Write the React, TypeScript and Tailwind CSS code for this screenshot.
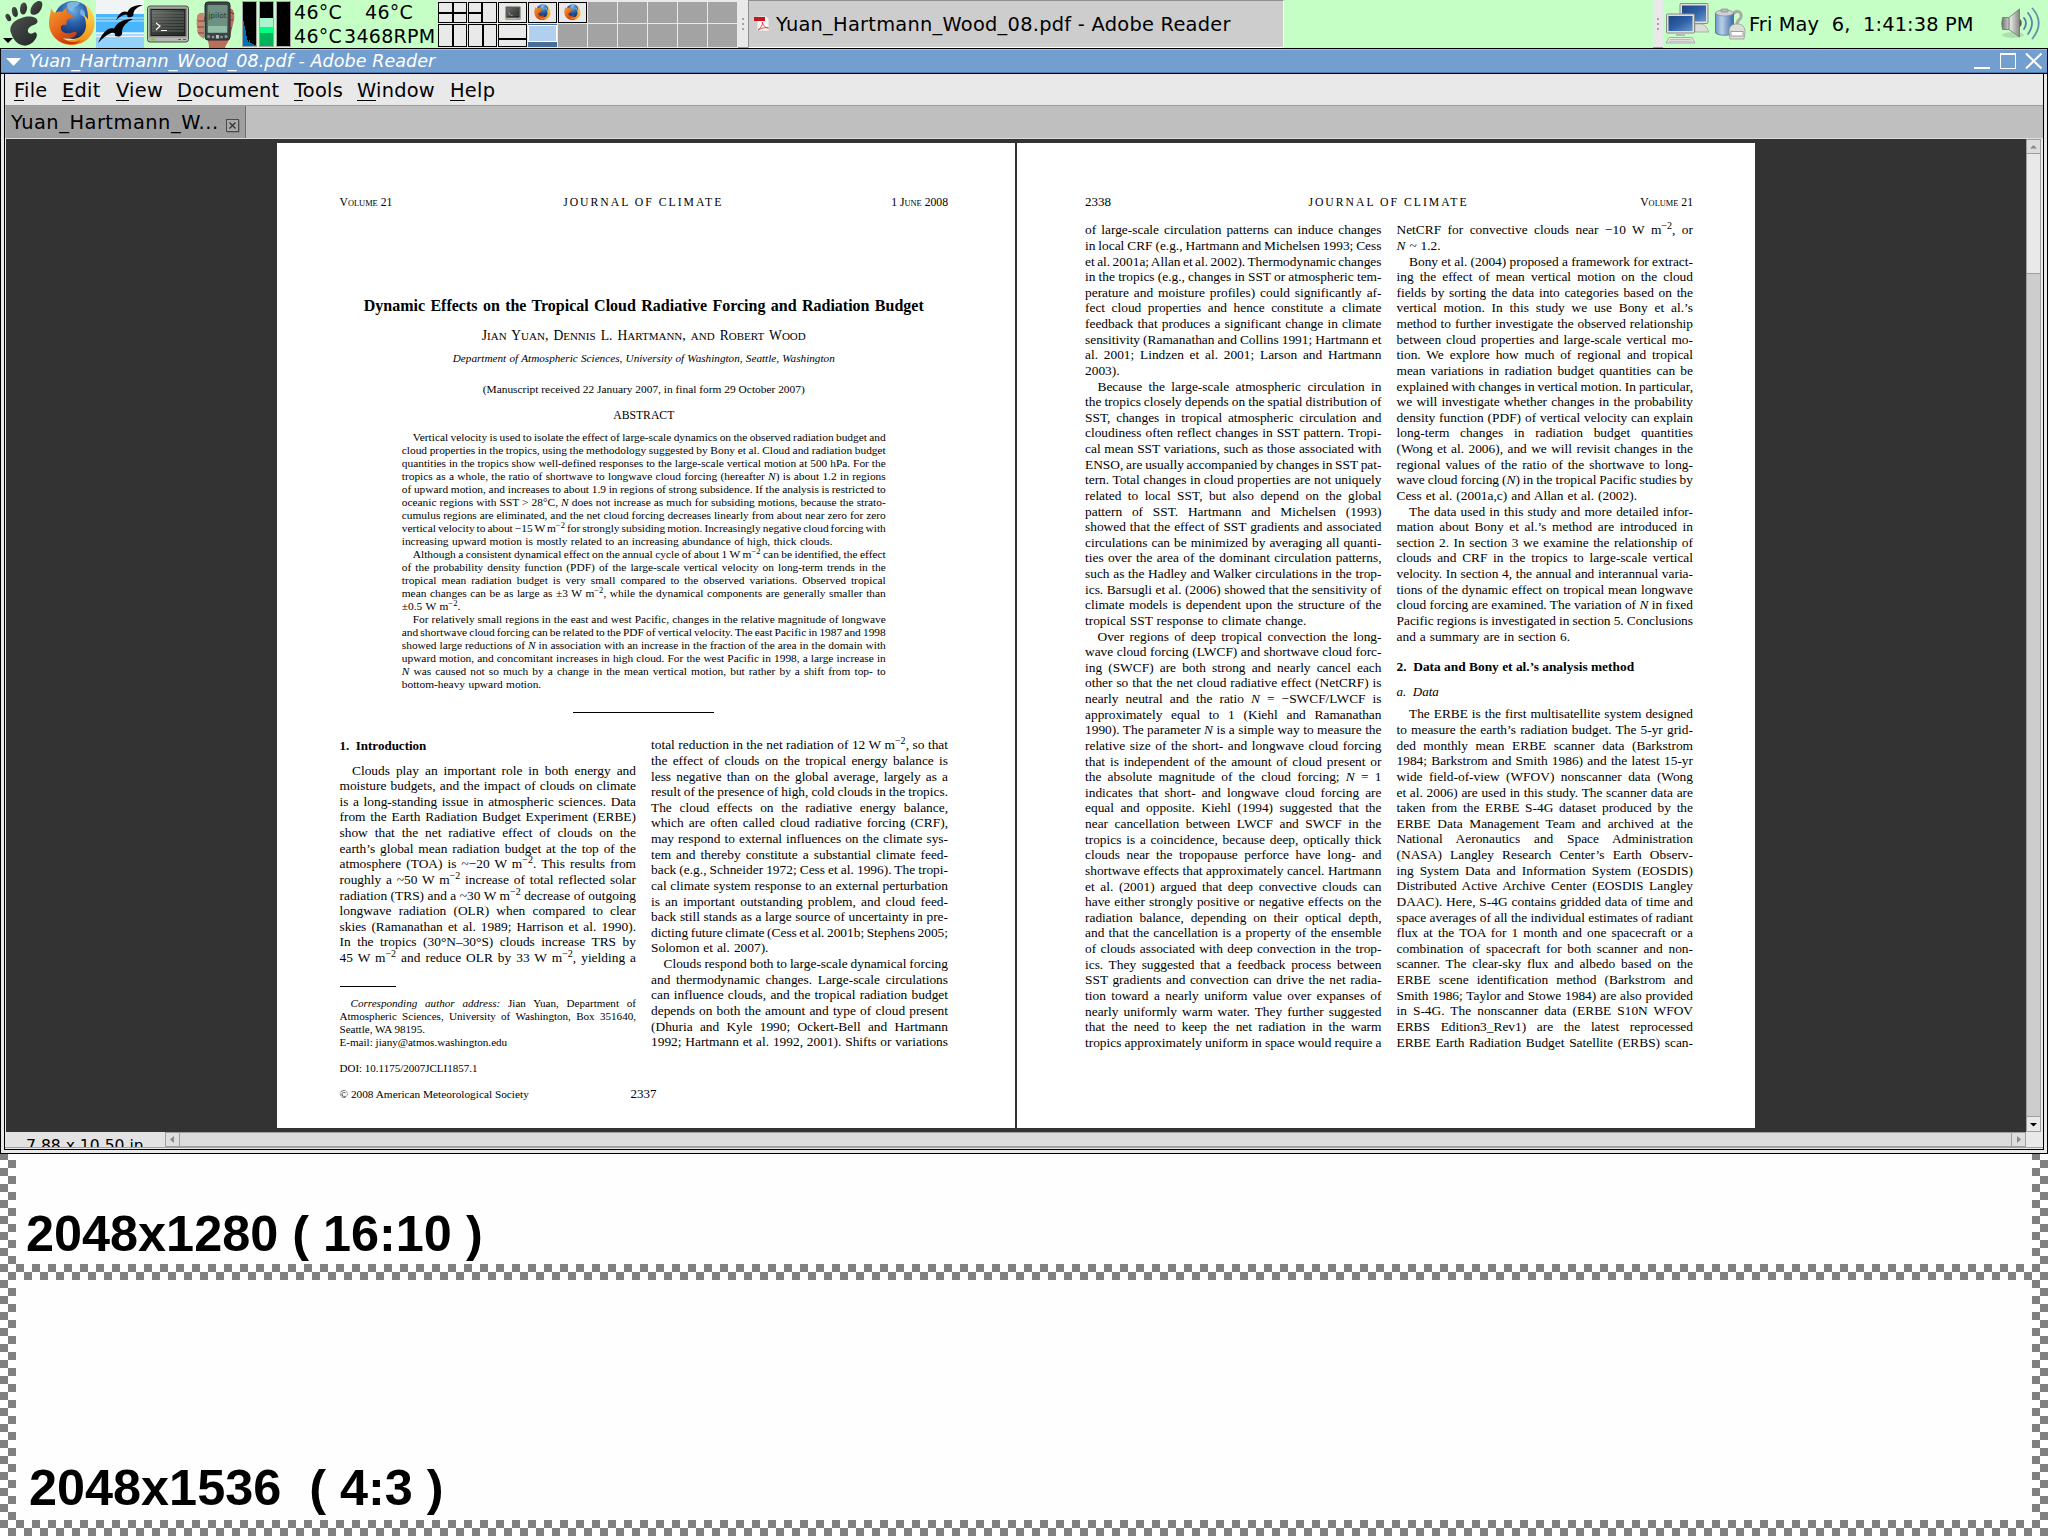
import { Fragment } from 'react';
import type { ReactNode } from 'react';
import clsx from 'clsx';

/*
 * Markup used in the article text below:
 *   one source line = one printed line, justified to the column
 *   leading ">"   first line of a paragraph (indented)
 *   trailing "|"  last line of a paragraph (not justified)
 *   *text*        italic
 *   ^text^        superscript
 */

const ABSTRACT = `
>Vertical velocity is used to isolate the effect of large-scale dynamics on the observed radiation budget and
cloud properties in the tropics, using the methodology suggested by Bony et al. Cloud and radiation budget
quantities in the tropics show well-defined responses to the large-scale vertical motion at 500 hPa. For the
tropics as a whole, the ratio of shortwave to longwave cloud forcing (hereafter *N*) is about 1.2 in regions
of upward motion, and increases to about 1.9 in regions of strong subsidence. If the analysis is restricted to
oceanic regions with SST > 28°C, *N* does not increase as much for subsiding motions, because the strato-
cumulus regions are eliminated, and the net cloud forcing decreases linearly from about near zero for zero
vertical velocity to about −15 W m^−2^ for strongly subsiding motion. Increasingly negative cloud forcing with
increasing upward motion is mostly related to an increasing abundance of high, thick clouds.|
>Although a consistent dynamical effect on the annual cycle of about 1 W m^−2^ can be identified, the effect
of the probability density function (PDF) of the large-scale vertical velocity on long-term trends in the
tropical mean radiation budget is very small compared to the observed variations. Observed tropical
mean changes can be as large as ±3 W m^−2^, while the dynamical components are generally smaller than
±0.5 W m^−2^.|
>For relatively small regions in the east and west Pacific, changes in the relative magnitude of longwave
and shortwave cloud forcing can be related to the PDF of vertical velocity. The east Pacific in 1987 and 1998
showed large reductions of *N* in association with an increase in the fraction of the area in the domain with
upward motion, and concomitant increases in high cloud. For the west Pacific in 1998, a large increase in
*N* was caused not so much by a change in the mean vertical motion, but rather by a shift from top- to
bottom-heavy upward motion.|`;

const INTRO_LEFT = `
>Clouds play an important role in both energy and
moisture budgets, and the impact of clouds on climate
is a long-standing issue in atmospheric sciences. Data
from the Earth Radiation Budget Experiment (ERBE)
show that the net radiative effect of clouds on the
earth’s global mean radiation budget at the top of the
atmosphere (TOA) is ~−20 W m^−2^. This results from
roughly a ~50 W m^−2^ increase of total reflected solar
radiation (TRS) and a ~30 W m^−2^ decrease of outgoing
longwave radiation (OLR) when compared to clear
skies (Ramanathan et al. 1989; Harrison et al. 1990).
In the tropics (30°N–30°S) clouds increase TRS by
45 W m^−2^ and reduce OLR by 33 W m^−2^, yielding a`;

const FOOTNOTE = `
>*Corresponding author address:* Jian Yuan, Department of
Atmospheric Sciences, University of Washington, Box 351640,
Seattle, WA 98195.|
E-mail: jiany@atmos.washington.edu|`;

const INTRO_RIGHT = `
total reduction in the net radiation of 12 W m^−2^, so that
the effect of clouds on the tropical energy balance is
less negative than on the global average, largely as a
result of the presence of high, cold clouds in the tropics.
The cloud effects on the radiative energy balance,
which are often called cloud radiative forcing (CRF),
may respond to external influences on the climate sys-
tem and thereby constitute a substantial climate feed-
back (e.g., Schneider 1972; Cess et al. 1996). The tropi-
cal climate system response to an external perturbation
is an important outstanding problem, and cloud feed-
back still stands as a large source of uncertainty in pre-
dicting future climate (Cess et al. 2001b; Stephens 2005;
Solomon et al. 2007).|
>Clouds respond both to large-scale dynamical forcing
and thermodynamic changes. Large-scale circulations
can influence clouds, and the tropical radiation budget
depends on both the amount and type of cloud present
(Dhuria and Kyle 1990; Ockert-Bell and Hartmann
1992; Hartmann et al. 1992, 2001). Shifts or variations`;

const PAGE2_LEFT = `
of large-scale circulation patterns can induce changes
in local CRF (e.g., Hartmann and Michelsen 1993; Cess
et al. 2001a; Allan et al. 2002). Thermodynamic changes
in the tropics (e.g., changes in SST or atmospheric tem-
perature and moisture profiles) could significantly af-
fect cloud properties and hence constitute a climate
feedback that produces a significant change in climate
sensitivity (Ramanathan and Collins 1991; Hartmann et
al. 2001; Lindzen et al. 2001; Larson and Hartmann
2003).|
>Because the large-scale atmospheric circulation in
the tropics closely depends on the spatial distribution of
SST, changes in tropical atmospheric circulation and
cloudiness often reflect changes in SST pattern. Tropi-
cal mean SST variations, such as those associated with
ENSO, are usually accompanied by changes in SST pat-
tern. Total changes in cloud properties are not uniquely
related to local SST, but also depend on the global
pattern of SST. Hartmann and Michelsen (1993)
showed that the effect of SST gradients and associated
circulations can be minimized by averaging all quanti-
ties over the area of the dominant circulation patterns,
such as the Hadley and Walker circulations in the trop-
ics. Barsugli et al. (2006) showed that the sensitivity of
climate models is dependent upon the structure of the
tropical SST response to climate change.|
>Over regions of deep tropical convection the long-
wave cloud forcing (LWCF) and shortwave cloud forc-
ing (SWCF) are both strong and nearly cancel each
other so that the net cloud radiative effect (NetCRF) is
nearly neutral and the ratio *N* = −SWCF/LWCF is
approximately equal to 1 (Kiehl and Ramanathan
1990). The parameter *N* is a simple way to measure the
relative size of the short- and longwave cloud forcing
that is independent of the amount of cloud present or
the absolute magnitude of the cloud forcing; *N* = 1
indicates that short- and longwave cloud forcing are
equal and opposite. Kiehl (1994) suggested that the
near cancellation between LWCF and SWCF in the
tropics is a coincidence, because deep, optically thick
clouds near the tropopause perforce have long- and
shortwave effects that approximately cancel. Hartmann
et al. (2001) argued that deep convective clouds can
have either strongly positive or negative effects on the
radiation balance, depending on their optical depth,
and that the cancellation is a property of the ensemble
of clouds associated with deep convection in the trop-
ics. They suggested that a feedback process between
SST gradients and convection can drive the net radia-
tion toward a nearly uniform value over expanses of
nearly uniformly warm water. They further suggested
that the need to keep the net radiation in the warm
tropics approximately uniform in space would require a`;

const PAGE2_RIGHT = `
NetCRF for convective clouds near −10 W m^−2^, or
*N* ~ 1.2.|
>Bony et al. (2004) proposed a framework for extract-
ing the effect of mean vertical motion on the cloud
fields by sorting the data into categories based on the
vertical motion. In this study we use Bony et al.’s
method to further investigate the observed relationship
between cloud properties and large-scale vertical mo-
tion. We explore how much of regional and tropical
mean variations in radiation budget quantities can be
explained with changes in vertical motion. In particular,
we will investigate whether changes in the probability
density function (PDF) of vertical velocity can explain
long-term changes in radiation budget quantities
(Wong et al. 2006), and we will revisit changes in the
regional values of the ratio of the shortwave to long-
wave cloud forcing (*N*) in the tropical Pacific studies by
Cess et al. (2001a,c) and Allan et al. (2002).|
>The data used in this study and more detailed infor-
mation about Bony et al.’s method are introduced in
section 2. In section 3 we examine the relationship of
clouds and CRF in the tropics to large-scale vertical
velocity. In section 4, the annual and interannual varia-
tions of the dynamic effect on tropical mean longwave
cloud forcing are examined. The variation of *N* in fixed
Pacific regions is investigated in section 5. Conclusions
and a summary are in section 6.|`;

const DATA_SECTION = `
>The ERBE is the first multisatellite system designed
to measure the earth’s radiation budget. The 5-yr grid-
ded monthly mean ERBE scanner data (Barkstrom
1984; Barkstrom and Smith 1986) and the latest 15-yr
wide field-of-view (WFOV) nonscanner data (Wong
et al. 2006) are used in this study. The scanner data are
taken from the ERBE S-4G dataset produced by the
ERBE Data Management Team and archived at the
National Aeronautics and Space Administration
(NASA) Langley Research Center’s Earth Observ-
ing System Data and Information System (EOSDIS)
Distributed Active Archive Center (EOSDIS Langley
DAAC). Here, S-4G contains gridded data of time and
space averages of all the individual estimates of radiant
flux at the TOA for 1 month and one spacecraft or a
combination of spacecraft for both scanner and non-
scanner. The clear-sky flux and albedo based on the
ERBE scene identification method (Barkstrom and
Smith 1986; Taylor and Stowe 1984) are also provided
in S-4G. The nonscanner data (ERBE S10N WFOV
ERBS Edition3_Rev1) are the latest reprocessed
ERBE Earth Radiation Budget Satellite (ERBS) scan-`;

/** Turns *italic* and ^superscript^ marks into elements */
function inline(text: string): ReactNode[] {
  return text.split(/(\*[^*]+\*|\^[^^]+\^)/).map((part, i) => {
    if (part.startsWith('*')) return <i key={i}>{part.slice(1, -1)}</i>;
    if (part.startsWith('^')) return <sup key={i}>{part.slice(1, -1)}</sup>;
    return <Fragment key={i}>{part}</Fragment>;
  });
}

interface TypesetProps {
  /** Marked-up source, see above */
  text: string;
  /** Type size: article body, abstract or footnote */
  size?: 'body' | 'abstract' | 'note';
  className?: string;
}

/** Block of pre-broken lines, justified through word spacing */
function Typeset({ text, size = 'body', className }: TypesetProps) {
  return (
    <div
      className={clsx(
        'whitespace-nowrap',
        size === 'body' && 'text-[13.4px] leading-[15.62px]',
        size === 'abstract' && 'text-[11.4px] leading-[13.02px]',
        size === 'note' && 'text-[11.1px] leading-[13.02px]',
        className,
      )}
    >
      {text.trim().split('\n').map((raw, i) => {
        const first = raw.startsWith('>');
        const last = raw.endsWith('|');
        const line = raw.slice(first ? 1 : 0, last ? -1 : undefined);
        return (
          <p
            key={i}
            className={clsx(
              first && (size === 'body' ? 'pl-[12.5px]' : 'pl-[11px]'),
              !last && '[text-align-last:justify] [word-spacing:-2px]',
              last && size !== 'note' && '[word-spacing:0.6px]',
            )}
          >
            {inline(line)}
          </p>
        );
      })}
    </div>
  );
}

/** Single line stretched to the width of its box */
function Fit({ className, children }: { className: string; children: ReactNode }) {
  return (
    <p className={clsx('mx-auto whitespace-nowrap [text-align-last:justify] [word-spacing:-2px]', className)}>
      {children}
    </p>
  );
}

function PageOne() {
  return (
    <article className="flex h-[985px] w-[738px] flex-col bg-white pt-[51.8px] pr-[67px] pl-[62.5px]">
      <div className="flex h-4 items-baseline justify-between text-[11.7px] leading-4">
        <span className="w-[160px]">
          V<span className="text-[8.4px]">OLUME</span> 21
        </span>
        <span className="pr-px tracking-[2px]">JOURNAL OF CLIMATE</span>
        <span className="w-[160px] text-right">
          1 J<span className="text-[8.4px]">UNE</span> 2008
        </span>
      </div>
      <Fit className="mt-[84.8px] w-[560px] text-[16px] leading-5 font-bold">
        Dynamic Effects on the Tropical Cloud Radiative Forcing and Radiation Budget
      </Fit>
      <Fit className="mt-[12.6px] w-[324px] text-[13.6px] leading-4">
        J<span className="text-[11px]">IAN</span> Y<span className="text-[11px]">UAN</span>, D
        <span className="text-[11px]">ENNIS</span> L. H<span className="text-[11px]">ARTMANN</span>,{' '}
        <span className="text-[11px]">AND</span> R<span className="text-[11px]">OBERT</span> W
        <span className="text-[11px]">OOD</span>
      </Fit>
      <Fit className="mt-[6px] w-[382px] text-[11.2px] leading-4 italic">
        Department of Atmospheric Sciences, University of Washington, Seattle, Washington
      </Fit>
      <Fit className="mt-[14.8px] w-[322px] text-[11.4px] leading-4">
        (Manuscript received 22 January 2007, in final form 29 October 2007)
      </Fit>
      <p className="mt-[10.9px] text-center text-[11.7px] leading-4">ABSTRACT</p>
      <Typeset size="abstract" text={ABSTRACT} className="mx-auto mt-[7.2px] w-[484px]" />
      <hr className="mx-auto mt-[20.5px] h-px w-[141px] border-0 bg-black" />
      <div className="mt-[24.4px] flex gap-[15px]">
        <div className="w-[296.5px]">
          <h2 className="mt-[0.6px] text-[13px] leading-4 font-bold whitespace-pre">1.  Introduction</h2>
          <Typeset text={INTRO_LEFT} className="mt-[8.7px]" />
          <hr className="mt-[20.2px] h-px w-14 border-0 bg-black" />
          <Typeset size="note" text={FOOTNOTE} className="mt-[10.4px]" />
          <p className="mt-[10.6px] text-[11px] leading-4">DOI: 10.1175/2007JCLI1857.1</p>
        </div>
        <Typeset text={INTRO_RIGHT} className="w-[297px]" />
      </div>
      <div className="mt-2.5 flex items-baseline text-[11.3px] leading-4">
        <span className="w-[291px]">© 2008 American Meteorological Society</span>
        <span className="text-[13px]">2337</span>
      </div>
    </article>
  );
}

function PageTwo() {
  return (
    <article className="flex h-[985px] w-[738px] flex-col bg-white pt-[51px] pr-[62px] pl-[68px]">
      <div className="flex h-4 items-baseline justify-between text-[11.7px] leading-4">
        <span className="w-[160px] text-[13px]">2338</span>
        <span className="pr-px tracking-[2px]">JOURNAL OF CLIMATE</span>
        <span className="w-[160px] text-right">
          V<span className="text-[8.4px]">OLUME</span> 21
        </span>
      </div>
      <div className="mt-[12.3px] flex gap-[15px]">
        <Typeset text={PAGE2_LEFT} className="w-[296.5px]" />
        <div className="w-[296.5px]">
          <Typeset text={PAGE2_RIGHT} />
          <h2 className="mt-[14.8px] text-[13.4px] leading-4 font-bold whitespace-pre">
            2.  Data and Bony et al.’s analysis method
          </h2>
          <h3 className="mt-[8.7px] text-[13px] leading-4 whitespace-pre italic">a.  Data</h3>
          <Typeset text={DATA_SECTION} className="mt-[6.8px]" />
        </div>
      </div>
    </article>
  );
}

/* ---------- panel icons ---------- */

function GnomeFoot() {
  return (
    <svg width="48" height="48" viewBox="0 0 48 48">
      <defs>
        <linearGradient id="foot" x1="0" y1="0" x2="1" y2="1">
          <stop offset="0" stopColor="#4d5250" />
          <stop offset="1" stopColor="#222726" />
        </linearGradient>
      </defs>
      <g fill="url(#foot)">
        <path d="M41.500 1.800c2 2.500.2 8-3.200 11.200-2.500 2.300-6.300 2.500-7.600.2C29.500 10 32 3.500 37 1.500c1.500-.6 3.500-.5 4.500.3z" />
        <ellipse cx="23.500" cy="8.500" rx="3.500" ry="6" transform="rotate(6 23.500 8.500)" />
        <ellipse cx="14.800" cy="12" rx="2.800" ry="5" transform="rotate(-12 14.800 12)" />
        <ellipse cx="8.300" cy="17.500" rx="2.400" ry="4" transform="rotate(-26 8.300 17.500)" />
        <path d="M24.500 17c6.500-1.500 13.500.5 13 4.500-.4 3.400-5.500 3.500-8 5.700-2.500 2.300-2 5.800.8 6.400 2.500.5 3.700-1.800 5.200-1.200 2.200.8 1.500 4.500-.4 7.200-2.600 3.800-6.500 6.500-11.500 6-6-.6-9.500-5-12-11C7.500 26.500 13.500 19.500 24.500 17z" />
      </g>
      <path d="M3 38h10l-5 5z" fill="#000" />
    </svg>
  );
}

function Firefox({ size }: { size: number }) {
  return (
    <svg width={size} height={size} viewBox="0 0 48 48">
      <defs>
        <radialGradient id="globe" cx=".5" cy=".25" r=".75">
          <stop offset="0" stopColor="#6fb0e2" />
          <stop offset=".45" stopColor="#2a62ac" />
          <stop offset="1" stopColor="#0d2658" />
        </radialGradient>
        <linearGradient id="fox" x1=".1" y1="0" x2=".8" y2="1">
          <stop offset="0" stopColor="#f59a2c" />
          <stop offset=".5" stopColor="#e5651a" />
          <stop offset="1" stopColor="#c02c0a" />
        </linearGradient>
        <linearGradient id="tail" x1="0" y1="0" x2="0" y2="1">
          <stop offset="0" stopColor="#ffe25c" />
          <stop offset="1" stopColor="#f28a12" />
        </linearGradient>
      </defs>
      <circle cx="25" cy="20" r="19" fill="url(#globe)" />
      <path d="M19 4c4-3 9-3 13-1-2 2-2 3-5 4s-1 4-4 4-4-4-4-7zM33 9c3 1 5 4 4 8-2-1-4-1-5-4z" fill="#8cc4ea" opacity=".75" />
      <path
        d="M37 4c6 4 9.500 11 9.500 19C46.500 36 36.500 45 24 45c-8 0-14-3-18-9 5 3 11 5 17 4 9-1 15-7 15-14.500 0-5-1-8-3-11 2 1 4 3 5 5 0-7-1-11-3-15.500z"
        fill="url(#tail)"
      />
      <path
        d="M3 8c1 2 2 4 4 5 2-1 4-2 7-1l5-5c-1 3 0 5 1 7 3 0 6 1 5 3-1 1-5 2-6 3-1 2 0 4-1 5-4-1-6 1-5 4 1 4 6 5 10 4 3-1 4-2 6 0-1 3-4 5-7 5-2 1-5 1-7 0 5 5 13 5 18 2-4 4-9 5-13 4C10 43 1 35 1 23 1 17 3 12 3 8z"
        fill="url(#fox)"
      />
      <path d="M6 36c8 9 22 10 31 3-7 7-23 8-31-3z" fill="#d23d0c" />
    </svg>
  );
}

function OpenOffice() {
  return (
    <svg width="48" height="48" viewBox="0 0 48 48">
      <rect width="48" height="48" fill="#f1f4f4" />
      <rect y="14" width="48" height="18" fill="#48b5fd" />
      <rect y="17" width="48" height="5" fill="#86cdfb" />
      <rect y="19" width="48" height="1" fill="#48b5fd" />
      <rect y="32" width="48" height="1" fill="#bfe3fb" />
      <rect y="34" width="48" height="2" fill="#a9dafb" />
      <rect y="37" width="48" height="11" fill="#93d3fb" />
      <g fill="#000">
        <path d="M2 43C6 33 12 26.500 18 28.500 22 21 29 19 37 19c-6 3-10 6.500-11 12 1 4.500-2 6.500-7 5 1-2.500-1-4-4-3-5 2-9 6-13 10z" />
        <path d="M20 20c3-6.500 7-10 11.500-8C34 6.500 40 5 47 5c-5 2-8.500 4-9.500 8 .5 4-2.500 5-6 4 .5-2-1-3-3.500-2-3 1-5 2.500-8 5z" />
      </g>
    </svg>
  );
}

function Terminal({ size }: { size: number }) {
  return (
    <svg width={size} height={size} viewBox="0 0 44 40">
      <defs>
        <linearGradient id="scr" x1="0" y1="0" x2="1" y2="1">
          <stop offset="0" stopColor="#6d736c" />
          <stop offset=".5" stopColor="#3a3f3b" />
          <stop offset="1" stopColor="#222624" />
        </linearGradient>
      </defs>
      <rect x="1.500" y="2" width="41" height="36" rx="2.500" fill="#b5b8b1" stroke="#4a4d49" />
      <rect x="3" y="3.500" width="38" height="30" rx="1" fill="#8b8f88" />
      <rect x="5" y="5.500" width="34" height="26" fill="url(#scr)" stroke="#1b1d1b" />
      <path d="M6 9h32M6 12h32M6 15h32M6 18h32M6 21h32M6 24h32M6 27h32" stroke="#858b84" strokeWidth=".6" />
      <path d="M10 19l4 3-4 4M15 26.500h6" fill="none" stroke="#fff" strokeWidth="1.200" />
      <rect x="5" y="34.500" width="4" height="2" fill="#6fd02a" />
      <path d="M32 35.500h3M37 35.500h3" stroke="#5b5e59" />
    </svg>
  );
}

function PalmPilot() {
  return (
    <svg width="48" height="48" viewBox="0 0 48 48">
      <path d="M6 17c3-3 7-2 7 1v18c3 4 4 7 4 12h16c1-4 4-6 5-11l4-17c1-8-1-13-6-11L8 24c-4 0-4-5-2-7z" fill="#b86f5c" />
      <path d="M5 16q2-4 7-3v26q-7-4-7-9 1-1 0-4t0-4q1-2 0-6z" fill="#c98572" />
      <path d="M6 21h6M5 27h7M6 33h6M38 12l4 2M37 20h4M36 28h4" stroke="#7c4034" strokeWidth="1.200" />
      <rect x="13" y="2" width="25" height="38" rx="3" fill="#3d4448" stroke="#23282a" />
      <rect x="15.500" y="5" width="20" height="28" rx="1" fill="#6f8f80" />
      <rect x="16" y="26" width="19" height="6.500" fill="#93bfa6" />
      <text x="25.500" y="17.500" textAnchor="middle" fontFamily="DejaVu Sans" fontSize="7.500" fill="#26332c">
        jpilot
      </text>
      <g fill="#8d979b">
        <circle cx="16.500" cy="36.500" r="1.500" />
        <circle cx="21" cy="37" r="1.300" />
        <circle cx="29.500" cy="37" r="1.300" />
        <circle cx="34" cy="36.500" r="1.500" />
      </g>
      <rect x="24" y="35" width="3" height="3.500" fill="#b6bec2" />
    </svg>
  );
}

function LoadMeters() {
  return (
    <svg width="50" height="48" viewBox="0 0 50 48" shapeRendering="crispEdges">
      {[0, 17, 34].map((x) => (
        <rect key={x} x={x + 0.5} y="1.500" width="14" height="45" fill="#000" stroke="#a5a5a5" />
      ))}
      <path d="M1 46V21h1v5h1v4h1v6h1v4h1v2h1v-2h1v3h2v1h2v1h2v1z" fill="#0072b3" />
      <rect x="18" y="18" width="13" height="9" fill="#a9f5d0" />
      <rect x="18" y="27" width="13" height="6" fill="#00ff82" />
      <rect x="18" y="33" width="13" height="13" fill="#00b35b" />
    </svg>
  );
}

function PdfIcon() {
  return (
    <svg width="16" height="16" viewBox="0 0 16 16">
      <path d="M3 0h9l3 3v12H3z" fill="#f4f4f4" stroke="#c4c4c4" strokeWidth=".6" />
      <rect x="0" y="1" width="11" height="4" fill="#c8151b" />
      <path d="M4 14c3-2 5-6 4.500-8 0 3 3 6 6 6-3-1-7 0-10.500 2z" fill="none" stroke="#e03035" strokeWidth=".8" />
    </svg>
  );
}

function NetworkIcon() {
  return (
    <svg width="44" height="42" viewBox="0 0 44 42">
      <defs>
        <linearGradient id="mon" x1="0" y1="0" x2="1" y2="1">
          <stop offset="0" stopColor="#1f4480" />
          <stop offset=".5" stopColor="#2c5fa8" />
          <stop offset="1" stopColor="#6d97cc" />
        </linearGradient>
      </defs>
      <rect x="15" y=".5" width="28" height="20" rx="1" fill="#dfe0dc" stroke="#8a8c88" />
      <rect x="17" y="2.500" width="24" height="16" fill="url(#mon)" />
      <path d="M30 21h8l4 4 2 4H30z" fill="#dcddd8" stroke="#9a9c98" strokeWidth=".7" />
      <rect x="1.500" y="11" width="28" height="19" rx="1" fill="#dfe0dc" stroke="#8a8c88" />
      <rect x="3.500" y="13" width="24" height="15" fill="url(#mon)" />
      <path d="M11 30h9v3h-9z" fill="#b9bbb6" />
      <path d="M4 34.500h23l3 5.500H1z" fill="#e6e6e2" stroke="#9a9c98" strokeWidth=".8" />
      <path d="M5 36.500h21M4 38.300h23" stroke="#a9aba6" strokeWidth=".7" />
    </svg>
  );
}

function PowerIcon() {
  return (
    <svg width="32" height="33" viewBox="0 0 32 33">
      <defs>
        <linearGradient id="cell" x1="0" y1="0" x2="1" y2="0">
          <stop offset="0" stopColor="#6c93c4" />
          <stop offset=".35" stopColor="#b9d0ea" />
          <stop offset="1" stopColor="#3c68a5" />
        </linearGradient>
      </defs>
      <path d="M19 6c4-5 9-2 8 3-1 4-5 3-4 9" fill="none" stroke="#a9aba6" strokeWidth="3" />
      <path d="M1.500 5v20c3 3 15 3 18 0V5z" fill="url(#cell)" stroke="#4a5f80" strokeWidth=".7" />
      <ellipse cx="10.500" cy="5" rx="9" ry="3" fill="#cfd3d6" stroke="#84898e" strokeWidth=".7" />
      <rect x="7" y="1" width="7" height="3" rx="1" fill="#b9bcbb" stroke="#777" strokeWidth=".6" />
      <path d="M15 24c0-6 3-8 8-8s8 2 8 8l-1 7H16z" fill="#dcddd9" stroke="#8d8f8b" strokeWidth=".7" />
      <rect x="17" y="23.500" width="12" height="4.500" fill="#fff" stroke="#8d8f8b" strokeWidth=".8" />
    </svg>
  );
}

function SpeakerIcon() {
  return (
    <svg width="42" height="34" viewBox="0 0 42 34">
      <defs>
        <linearGradient id="spk" x1="0" y1="0" x2="1" y2="0">
          <stop offset="0" stopColor="#6f716d" />
          <stop offset=".5" stopColor="#e4e5e1" />
          <stop offset="1" stopColor="#84867f" />
        </linearGradient>
      </defs>
      <ellipse cx="12" cy="28" rx="11" ry="3" fill="#000" opacity=".12" />
      <path d="M1.500 10.500h6.500L18.500 2v28L8 22.500H1.500q-1.500-6 0-12z" fill="url(#spk)" stroke="#6f716d" strokeWidth=".8" />
      <path d="M8 10.500v12" stroke="#7b7d78" />
      <path d="M18.500 12c3 1 3 7 0 8z" fill="#5a5c58" />
      <g fill="none" stroke="#4b78ad" strokeWidth="1.800" strokeLinecap="round">
        <path d="M23 11q4 5 0 11" />
        <path d="M27 6q8 10 0 21" opacity=".9" />
        <path d="M31.500 1.500q12.500 14 0 30" opacity=".8" />
      </g>
    </svg>
  );
}

/* ---------- top panel ---------- */

const win = 'border border-black bg-[#e9e9e9]';

/** Workspace switcher, ten columns by two rows */
function Pager() {
  return (
    <div className="grid h-[47px] w-[300px] grid-cols-[repeat(10,30px)] grid-rows-[21px_23px] gap-y-px bg-[#e9e9e9] pt-[2px] *:mr-px">
      <div className="grid grid-cols-2 grid-rows-2">
        <div className={win} />
        <div className={win} />
        <div className={win} />
        <div className={win} />
      </div>
      <div className="flex">
        <div className="flex w-[14px] flex-col">
          <div className={clsx(win, 'flex-1')} />
          <div className={clsx(win, 'flex-1')} />
        </div>
        <div className={clsx(win, 'flex-1')} />
      </div>
      <div className={clsx(win, 'flex items-center justify-center')}>
        <Terminal size={16} />
      </div>
      <div className={clsx(win, 'flex items-center justify-center')}>
        <Firefox size={17} />
      </div>
      <div className={clsx(win, 'flex items-center justify-center')}>
        <Firefox size={17} />
      </div>
      {[0, 1, 2, 3, 4].map((i) => (
        <div key={i} className="bg-[#a3a3a3]" />
      ))}

      <div className="grid grid-cols-2">
        <div className={win} />
        <div className={win} />
      </div>
      <div className="grid grid-cols-2">
        <div className={win} />
        <div className={win} />
      </div>
      <div className="flex flex-col">
        <div className={clsx(win, 'h-[15px]')} />
        <div className={clsx(win, 'flex-1')} />
      </div>
      <div className="bg-[#4a6c98] pt-px">
        <div className="h-[17px] border border-white bg-[#b1cfef]" />
      </div>
      {[0, 1, 2, 3, 4, 5].map((i) => (
        <div key={i} className="bg-[#a3a3a3]" />
      ))}
    </div>
  );
}

function Grip() {
  return (
    <div className="flex h-12 w-2.5 flex-col items-center justify-center gap-[3px] border-b border-[#9f9f9f] bg-[#e9e9e9]">
      <i className="size-[2px] bg-[#a3a3a3]" />
      <i className="size-[2px] bg-[#a3a3a3]" />
      <i className="size-[2px] bg-[#a3a3a3]" />
    </div>
  );
}

function TopPanel() {
  return (
    <header className="flex h-12 bg-[#c6ffc6] text-[19.4px]">
      <GnomeFoot />
      <Firefox size={48} />
      <OpenOffice />
      <div className="flex w-12 items-center justify-center pr-px">
        <Terminal size={44} />
      </div>
      <PalmPilot />
      <div className="w-[52px] pl-[2px]">
        <LoadMeters />
      </div>
      <div className="grid w-[146px] grid-cols-[50px_96px] pt-px text-[19px] leading-[23.5px] tracking-[0.3px] whitespace-nowrap">
        <span className="pl-[2px]">46°C</span>
        <span className="pl-[23px]">46°C</span>
        <span className="pl-[2px]">46°C</span>
        <span className="pl-[2px]">3468RPM</span>
      </div>
      <Pager />
      <Grip />
      <div className="flex w-[536px] items-center border-x border-t border-b border-t-[#8f8f8f] border-r-white border-b-white border-l-[#8f8f8f] bg-[#cdcdcd] pl-[5px]">
        <PdfIcon />
        <span className="pt-[2px] pl-[6px] tracking-[0.26px]">Yuan_Hartmann_Wood_08.pdf - Adobe Reader</span>
      </div>
      <div className="w-[369px]" />
      <Grip />
      <div className="flex flex-1 items-center">
        <div className="pl-[2px]"><NetworkIcon /></div>
        <div className="pl-[5px]"><PowerIcon /></div>
        <span className="w-[255px] pt-[2px] pl-[3px] tracking-[0.12px] whitespace-pre">Fri May  6,  1:41:38 PM</span>
        <SpeakerIcon />
      </div>
    </header>
  );
}

/* ---------- reader window ---------- */

const MENUS = [
  { label: 'File', width: 'w-[48px]' },
  { label: 'Edit', width: 'w-[54px]' },
  { label: 'View', width: 'w-[61px]' },
  { label: 'Document', width: 'w-[117px]' },
  { label: 'Tools', width: 'w-[63px]' },
  { label: 'Window', width: 'w-[93px]' },
  { label: 'Help', width: 'w-[60px]' },
];

function TitleBar() {
  return (
    <div className="flex h-[26px] items-center border-y border-t-black border-b-black bg-[#729fcf] text-[17.5px] leading-[24px] text-white italic shadow-[inset_0_1px_#9dbfe3,inset_0_-1px_#4f7cb0]">
      <svg width="28" height="24" viewBox="0 0 28 24">
        <path d="M5 9h15l-7.500 8z" fill="#fff" />
      </svg>
      <span className="flex-1 tracking-[0.07px]">Yuan_Hartmann_Wood_08.pdf - Adobe Reader</span>
      <svg width="74" height="24" viewBox="0 0 74 24" fill="none" stroke="#fff">
        <path d="M1 19h16" strokeWidth="2" />
        <path d="M27.500 5v14.500h15V5z" />
        <path d="M27 5h16" strokeWidth="2" />
        <path d="M53 4.500l15.500 15M68.500 4.500L53 19.500" strokeWidth="2" />
      </svg>
    </div>
  );
}

function ArrowButton({ d, className, fill = '#8a8a8a' }: { d: string; className: string; fill?: string }) {
  return (
    <div className={clsx('flex items-center justify-center border-[#9f9f9f]', className)}>
      <svg width="7" height="7" viewBox="0 0 7 7">
        <path d={d} fill={fill} />
      </svg>
    </div>
  );
}

function ReaderWindow() {
  return (
    <main className="flex h-[1106px] flex-col border-x border-b border-black bg-[#e9e9e9]">
      <TitleBar />
      <div className="mx-[3px] mb-[3px] flex flex-1 flex-col overflow-hidden border-x border-b border-black">
        <nav className="flex h-8 items-center border-b border-[#9f9f9f] bg-[#e9e9e9] pt-[2px] pl-[9px] text-[19.4px] tracking-[0.25px]">
          {MENUS.map(({ label, width }) => (
            <span key={label} className={width}>
              <span className="underline decoration-1 underline-offset-[3px]">{label[0]}</span>
              {label.slice(1)}
            </span>
          ))}
        </nav>
        <div className="flex h-[33px] border-b border-[#dcdcdc] bg-[#bfbfbf] pl-px">
          <div className="flex w-[240px] items-center border-r border-[#6f6f6f] bg-[#9f9f9f] pl-[5px] text-[19.4px]">
            <span className="w-[215px] pt-px tracking-[0.52px]">Yuan_Hartmann_W...</span>
            <svg width="14" height="14" viewBox="0 0 14 14" className="mt-[7px]">
              <rect x="1.500" y="1.500" width="12" height="12" fill="#6a6a6a" />
              <rect x=".5" y=".5" width="12" height="12" fill="#a9a9a9" stroke="#4a4a4a" />
              <path d="M3.500 3.500l6 6M9.500 3.500l-6 6" stroke="#333" strokeWidth="1.300" />
            </svg>
          </div>
        </div>

        <div className="flex h-[993px]">
          <div className="ml-px flex w-[2020px] gap-[2px] bg-[#333] pt-1 pl-[271px] font-['Liberation_Serif',serif]">
            <PageOne />
            <PageTwo />
          </div>
          <div className="flex w-[15px] flex-col border-x border-[#9f9f9f] bg-[#e9e9e9]">
            <ArrowButton d="M0 5.500L3.500 2 7 5.500z" className="h-[15px] border-y bg-[#dcdcdc]" />
            <div className="flex-1 pt-[119px]">
              <div className="h-full border-y border-[#9f9f9f] bg-[#cdcdcd]" />
            </div>
            <ArrowButton d="M0 2h7L3.500 5.500z" fill="#000" className="h-[15px] border-b" />
          </div>
        </div>

        <div className="flex h-[16px] overflow-hidden border-b border-[#9f9f9f] pl-px">
          <div className="w-[159px] bg-[#e3e3e3] pt-[5px] pl-[20px] text-[15.6px] leading-[18px]">7.88 x 10.50 in</div>
          <div className="flex h-[15px] w-[1861px] border border-[#9f9f9f] bg-[#dcdcdc]">
            <ArrowButton d="M5 0v7L1 3.500z" className="w-[14px] border-r bg-[#dedede]" />
            <div className="flex-1" />
            <ArrowButton d="M2 0l4 3.500L2 7z" className="w-[14px] border-l bg-[#dedede]" />
          </div>
        </div>
      </div>
    </main>
  );
}

export default function App() {
  return (
    <div className="h-[1536px] w-[2048px] overflow-hidden bg-[conic-gradient(#fff_25%,#808080_0_50%,#fff_0_75%,#808080_0)] bg-size-[16px_16px] font-['DejaVu_Sans',sans-serif] text-black">
      <TopPanel />
      <ReaderWindow />
      <section className="mx-4 flex flex-col gap-4 font-['Liberation_Sans',sans-serif] text-[50.4px] leading-[56px] font-bold whitespace-pre">
        <div className="h-[110px] bg-[#fefefe] pt-[52px] pl-[10px]">2048x1280 ( 16:10 )</div>
        <div className="h-[240px] bg-[#fefefe] pt-[180px] pl-[13px]">2048x1536  ( 4:3 )</div>
      </section>
    </div>
  );
}
